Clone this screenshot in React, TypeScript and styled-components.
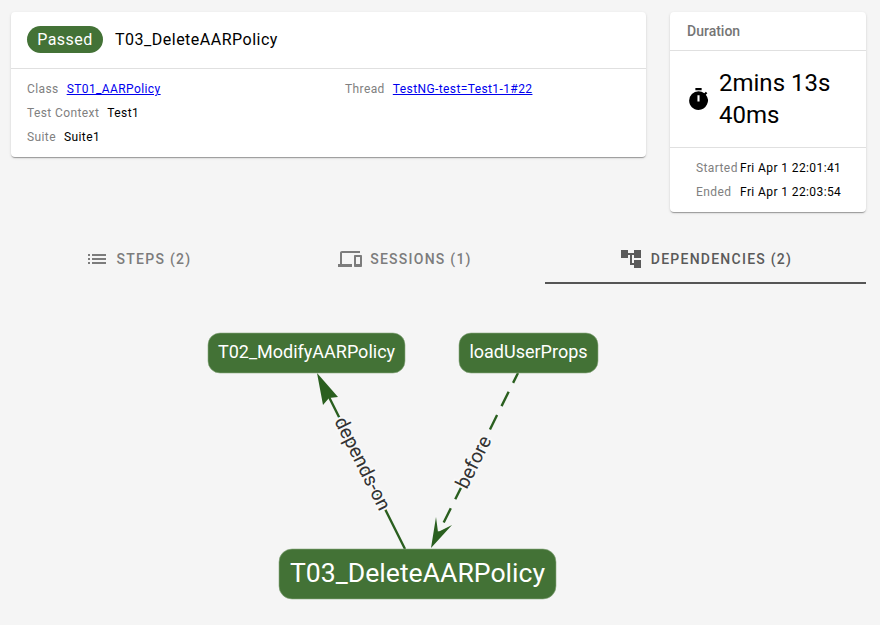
import React from "react";
import styled, { createGlobalStyle } from "styled-components";
import { MdAccountTree, MdDevices, MdList, MdTimer } from "react-icons/md";

const GlobalStyle = createGlobalStyle`
  html, body {
    margin: 0;
    height: 100%;
    overflow: hidden;
    background: #f5f5f5;
  }
  body {
    font-family: Roboto, "Liberation Sans", sans-serif;
    color: rgba(0, 0, 0, 0.87);
  }
`;

const Page = styled.div`
  width: 880px;
  height: 625px;
`;

const TopRow = styled.div`
  display: grid;
  grid-template-columns: 635px 196px;
  column-gap: 24px;
  align-items: start;
  padding: 12px 0 0 11px;
`;

const Card = styled.section`
  background: #fff;
  border-radius: 4px;
  box-shadow: 0 2px 1px -1px rgba(0, 0, 0, 0.2), 0 1px 1px 0 rgba(0, 0, 0, 0.14),
    0 1px 3px 0 rgba(0, 0, 0, 0.12);
`;

const SummaryHeader = styled.header`
  display: flex;
  align-items: center;
  gap: 12px;
  height: 55px;
  padding: 0 16px 1px;
  border-bottom: 1px solid #e0e0e0;
`;

const StatusPill = styled.span`
  display: inline-flex;
  align-items: center;
  justify-content: center;
  width: 76px;
  height: 27px;
  border-radius: 14px;
  background: #437236;
  color: #fff;
  font-size: 16px;
  letter-spacing: 0.5px;
`;

const TestTitle = styled.span`
  font-size: 16px;
  letter-spacing: 0.5px;
  color: #000;
`;

const DetailGrid = styled.div`
  display: grid;
  grid-template-columns: 318px 1fr;
  grid-auto-rows: 24px;
  padding: 8px 16px 8px;
`;

const Detail = styled.div`
  display: flex;
  align-items: center;
  gap: 8px;
  font-size: 12px;
  letter-spacing: 0.4px;
`;

const Label = styled.span`
  color: #808080;
`;

const Value = styled.span`
  color: #000;
`;

const DetailLink = styled.a`
  color: #0000ee;
  text-decoration: underline;
`;

const DurationHeader = styled.header`
  display: flex;
  align-items: center;
  height: 38px;
  padding: 0 17px;
  border-bottom: 1px solid #e0e0e0;
  color: #757575;
  font-size: 14px;
  font-weight: 500;
`;

const DurationBody = styled.div`
  display: flex;
  align-items: center;
  gap: 8px;
  height: 96px;
  padding: 0 16px;
  border-bottom: 1px solid #e0e0e0;
  font-size: 24px;
  line-height: 32px;
  color: #000;

  svg {
    flex: none;
    color: #000;
  }
`;

const TimeTable = styled.div`
  display: grid;
  grid-template-columns: 44px auto;
  grid-auto-rows: 24px;
  align-items: center;
  padding: 8px 0 8px 26px;
  font-size: 12px;
  letter-spacing: 0.4px;
`;

const Tabs = styled.nav`
  display: grid;
  grid-template-columns: 254px 280px 321px;
  margin: 23px 0 0 11px;
`;

const Tab = styled.div<{ $active?: boolean }>`
  display: flex;
  align-items: center;
  justify-content: center;
  gap: 8px;
  height: 46px;
  padding-top: 1px;
  font-size: 14px;
  font-weight: 500;
  letter-spacing: 1.25px;
  color: ${({ $active }) => ($active ? "#5a5a5a" : "#7c7c7c")};
  border-bottom: 2px solid ${({ $active }) => ($active ? "#555" : "transparent")};
`;

const GraphCanvas = styled.svg`
  display: block;
  width: 880px;
  height: 341px;
`;

const EdgeLine = styled.path<{ $dashed?: boolean }>`
  fill: none;
  stroke: #2a5f1f;
  stroke-width: 2.4px;
  stroke-dasharray: ${({ $dashed }) => ($dashed ? "16 10" : "none")};
  stroke-dashoffset: ${({ $dashed }) => ($dashed ? "5" : "0")};
`;

const ArrowHead = styled.path`
  fill: #2a5f1f;
`;

const EdgeLabel = styled.text`
  font-size: 19.5px;
  fill: #333;
  stroke: #f8f8f8;
  stroke-width: 4px;
  paint-order: stroke;
  text-anchor: middle;
  dominant-baseline: central;
`;

const NodeBox = styled.rect`
  fill: #437236;
  stroke: #8aa77f;
  stroke-width: 0.6px;
`;

const NodeLabel = styled.text<{ $size: number }>`
  font-size: ${({ $size }) => $size}px;
  fill: #fff;
  text-anchor: middle;
  dominant-baseline: central;
`;

const GraphNode = ({ x, y, w, h, r, size, label }: {
  x: number; y: number; w: number; h: number; r: number; size: number; label: string;
}) => (
  <g>
    <NodeBox x={x} y={y} width={w} height={h} rx={r} />
    <NodeLabel $size={size} x={x + w / 2} y={y + h / 2 - 1.5}>{label}</NodeLabel>
  </g>
);

export default function App() {
  return (
    <Page>
      <GlobalStyle />
      <TopRow>
        <Card>
          <SummaryHeader>
            <StatusPill>Passed</StatusPill>
            <TestTitle>T03_DeleteAARPolicy</TestTitle>
          </SummaryHeader>
          <DetailGrid>
            <Detail>
              <Label>Class</Label>
              <DetailLink href="#">ST01_AARPolicy</DetailLink>
            </Detail>
            <Detail>
              <Label>Thread</Label>
              <DetailLink href="#">TestNG-test=Test1-1#22</DetailLink>
            </Detail>
            <Detail>
              <Label>Test Context</Label>
              <Value>Test1</Value>
            </Detail>
            <div />
            <Detail>
              <Label>Suite</Label>
              <Value>Suite1</Value>
            </Detail>
          </DetailGrid>
        </Card>
        <Card>
          <DurationHeader>Duration</DurationHeader>
          <DurationBody>
            <MdTimer size={25} />
            <span>2mins 13s 40ms</span>
          </DurationBody>
          <TimeTable>
            <Label>Started</Label>
            <Value>Fri Apr 1 22:01:41</Value>
            <Label>Ended</Label>
            <Value>Fri Apr 1 22:03:54</Value>
          </TimeTable>
        </Card>
      </TopRow>
      <Tabs>
        <Tab><MdList size={24} />STEPS (2)</Tab>
        <Tab><MdDevices size={24} />SESSIONS (1)</Tab>
        <Tab $active><MdAccountTree size={24} />DEPENDENCIES (2)</Tab>
      </Tabs>
      <GraphCanvas viewBox="0 284 880 341">
        <EdgeLine d="M405 549 L326 391" />
        <ArrowHead d="M317 373 L338 397 L329 398 L323 405 Z" />
        <EdgeLine $dashed d="M518 373 L439 532" />
        <ArrowHead d="M431 548 L436 517 L438 532 L452 525 Z" />
        <EdgeLabel transform="translate(362.5 463.5) rotate(63.4)">depends-on</EdgeLabel>
        <EdgeLabel transform="translate(473.5 462) rotate(-63.4)">before</EdgeLabel>
        <GraphNode x={208} y={333} w={197} h={40} r={12} size={18} label="T02_ModifyAARPolicy" />
        <GraphNode x={459} y={333} w={139} h={40} r={12} size={18} label="loadUserProps" />
        <GraphNode x={279} y={549} w={277} h={50} r={13} size={26.6} label="T03_DeleteAARPolicy" />
      </GraphCanvas>
    </Page>
  );
}
